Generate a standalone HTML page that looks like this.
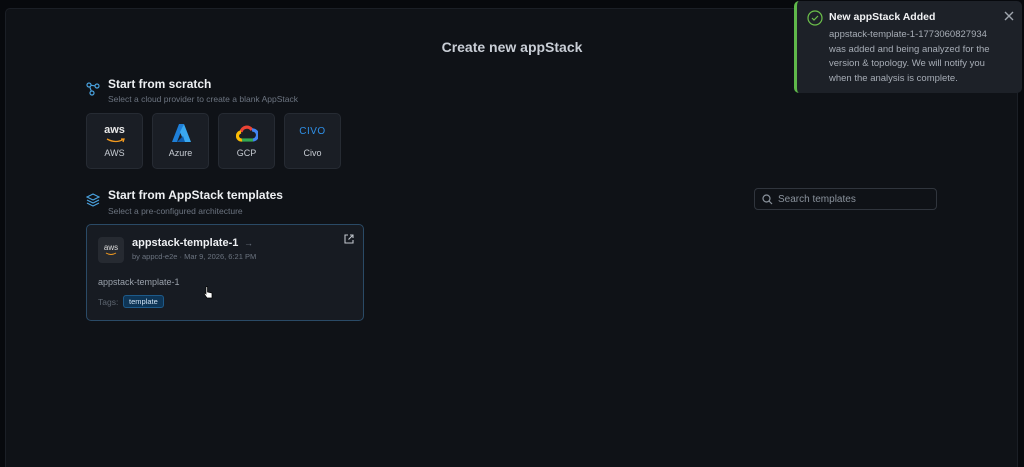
<!DOCTYPE html>
<html><head><meta charset="utf-8"><style>
*{margin:0;padding:0;box-sizing:border-box}
html,body{width:1024px;height:467px;overflow:hidden}
body{background:#07090d;font-family:"Liberation Sans",sans-serif;position:relative;color:#e6e9ee}
.panel{position:absolute;left:5px;top:8px;width:1013px;height:459px;background:#0f1217;border:1px solid #1b1f26;border-bottom:none;border-radius:5px 5px 0 0}
.title{position:absolute;left:0;width:1024px;top:39px;text-align:center;font-size:14px;font-weight:bold;color:#c9ced6}
.h{position:absolute;font-size:12px;font-weight:bold;color:#eef0f3}
.sub{position:absolute;font-size:8.5px;color:#6c7480}
.prov{position:absolute;top:113px;width:57px;height:56px;background:#1a1e25;border:1px solid #262b33;border-radius:5px;text-align:center}
.prov .l{position:absolute;bottom:10px;left:0;right:0;font-size:9px;color:#c7ccd3}
.card{position:absolute;left:86px;top:224px;width:278px;height:97px;background:#171b22;border:1px solid #2a4a66;border-radius:5px}
.search{position:absolute;left:754px;top:188px;width:183px;height:22px;border:1px solid #30353d;border-radius:4px;background:#0f1217}
.toast{position:absolute;left:794px;top:1px;width:228px;height:92px;background:#1d2128;border-radius:5px;border-left:3px solid #5fb84a}
</style></head><body>
<div class="panel"></div>
<div class="title">Create new appStack</div>

<svg style="position:absolute;left:86px;top:82px" width="14" height="14" viewBox="0 0 14 14" fill="none" stroke="#4aa3e0" stroke-width="1.2"><circle cx="3" cy="3" r="2"/><circle cx="11" cy="4" r="2"/><circle cx="6" cy="11" r="2"/><path d="M5 3.3L9 3.8M3.8 4.8L5.3 9.2"/></svg>
<div class="h" style="left:108px;top:77px">Start from scratch</div>
<div class="sub" style="left:108px;top:94px">Select a cloud provider to create a blank AppStack</div>

<div class="prov" style="left:86px"><div style="position:absolute;top:10px;left:0;right:0;font-size:11px;color:#e8e8e8;font-weight:bold">aws</div><svg style="position:absolute;left:19px;top:24px" width="20" height="6"><path d="M1 1Q10 6 18 1M15 1L18 1L17 4" stroke="#f29a1f" stroke-width="1.3" fill="none"/></svg><div class="l">AWS</div></div>
<div class="prov" style="left:152px"><svg style="position:absolute;left:19px;top:10px" width="19" height="18" viewBox="0 0 19 18"><path d="M7 0H12L5 18H0Z" fill="#1e7fd8"/><path d="M12 0L19 18H12L8 8Z" fill="#39a8f0"/><path d="M5 18L11 12L13 18Z" fill="#0f5fb0"/></svg><div class="l">Azure</div></div>
<div class="prov" style="left:218px"><svg style="position:absolute;left:17px;top:10px" width="22" height="18" viewBox="0 0 22 18" fill="none" stroke-width="3.2"><path d="M5 8A6 6 0 0 1 16 6" stroke="#ea4335"/><path d="M16 6A5 5 0 0 1 17 16" stroke="#4285f4"/><path d="M17 16H6" stroke="#34a853"/><path d="M6 16A4 4 0 0 1 5 8" stroke="#fbbc05"/></svg><div class="l">GCP</div></div>
<div class="prov" style="left:284px"><div style="position:absolute;top:12px;left:0;right:0;font-size:10px;color:#2f8fe6;letter-spacing:0.5px">CIVO</div><div class="l">Civo</div></div>

<svg style="position:absolute;left:86px;top:193px" width="14" height="14" viewBox="0 0 14 14" fill="none" stroke="#4aa3e0" stroke-width="1.2"><path d="M7 1L13 4L7 7L1 4Z"/><path d="M1 7L7 10L13 7M1 10L7 13L13 10"/></svg>
<div class="h" style="left:108px;top:188px">Start from AppStack templates</div>
<div class="sub" style="left:108px;top:206px">Select a pre-configured architecture</div>

<div class="search"><svg style="position:absolute;left:7px;top:5px" width="11" height="11" fill="none" stroke="#8a929c" stroke-width="1.2"><circle cx="4.5" cy="4.5" r="3.5"/><path d="M7 7L10 10"/></svg><div style="position:absolute;left:23px;top:5px;font-size:10px;color:#8a929c">Search templates</div></div>

<div class="card">
<div style="position:absolute;left:11px;top:12px;width:26px;height:26px;background:#262a31;border-radius:4px;text-align:center;font-size:8px;color:#ddd;padding-top:6px">aws<svg style="position:absolute;left:7px;top:15px" width="12" height="4"><path d="M1 1Q6 4 11 1" stroke="#f29a1f" fill="none"/></svg></div>
<div style="position:absolute;left:45px;top:12px;font-size:11px;font-weight:bold;color:#eef0f3">appstack-template-1 <span style="color:#6c7480;font-weight:normal;font-size:9px">&nbsp;→</span></div>
<div style="position:absolute;left:45px;top:27px;font-size:7.5px;color:#6c7480">by appcd-e2e · Mar 9, 2026, 6:21 PM</div>
<svg style="position:absolute;left:257px;top:9px" width="10" height="10" fill="none" stroke="#c0c5cc" stroke-width="1.1"><path d="M4 1H1V9H9V6M6 1H9V4M9 1L4.5 5.5"/></svg>
<div style="position:absolute;left:11px;top:52px;font-size:9px;color:#9aa1ab">appstack-template-1</div>
<div style="position:absolute;left:11px;top:72px;font-size:8.5px;color:#5d6570">Tags:</div>
<div style="position:absolute;left:36px;top:70px;height:13px;padding:0 5px;background:#0e3556;border:1px solid #1d5a8a;border-radius:3px;font-size:7.5px;color:#cfe3f5;line-height:11px">template</div>
</div>
<svg style="position:absolute;left:203px;top:286px" width="10" height="13" viewBox="0 0 10 13"><path d="M3 1V8L2 7Q1 7 1.5 8.5L4 12H9V7L4.5 6V1Q3.8 0 3 1Z" fill="#fff" stroke="#000" stroke-width="0.7"/></svg>

<div class="toast">
<svg style="position:absolute;left:10px;top:9px" width="16" height="16" fill="none" stroke="#6cc04a" stroke-width="1.2"><circle cx="8" cy="8" r="7"/><path d="M5 8L7 10L11 6"/></svg>
<div style="position:absolute;left:32px;top:10px;font-size:10.5px;font-weight:bold;color:#f2f3f5">New appStack Added</div>
<div style="position:absolute;left:32px;top:27px;width:172px;font-size:9.5px;line-height:14.7px;color:#a7adb6">appstack-template-1-1773060827934 was added and being analyzed for the version &amp; topology. We will notify you when the analysis is complete.</div>
<svg style="position:absolute;left:207px;top:10px" width="10" height="10" stroke="#a0a6ae" stroke-width="1.4"><path d="M1 1L9 9M9 1L1 9"/></svg>
</div>
</body></html>
